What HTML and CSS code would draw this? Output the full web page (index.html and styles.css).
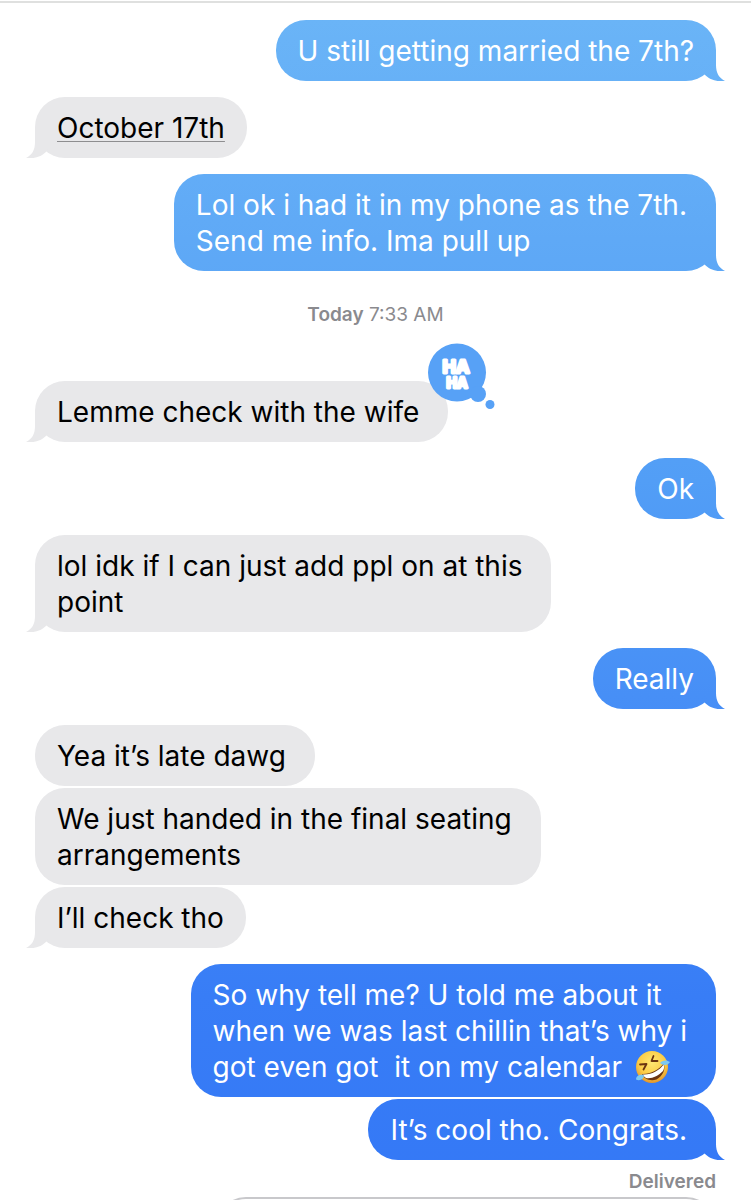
FILE: index.html
```
<!DOCTYPE html>
<html lang="en">
<head>
    <meta charset="UTF-8">
    <meta name="viewport" content="width=device-width, initial-scale=1.0">
    <title>Messages</title>
    <link rel="stylesheet" href="styles.css">
</head>
<body>
    <main class="chat">
        <div class="bubble sent tail">U still getting married the 7th?</div>
        <div class="bubble received tail"><a class="date-link" href="#">October 17th</a></div>
        <div class="bubble sent tail wide">Lol ok i had it in my phone as the 7th.<br>Send me info. Ima pull up</div>

        <p class="timestamp"><strong>Today</strong> 7:33 AM</p>

        <div class="bubble received tail wide">
            Lemme check with the wife
            <svg class="reaction" viewBox="0 0 68 67" role="img" aria-label="Ha ha">
                <circle cx="29" cy="29.5" r="29"/>
                <circle cx="50" cy="51" r="8"/>
                <circle cx="62" cy="61.5" r="4.5"/>
                <text x="28" y="30" font-size="18">HA</text>
                <text x="29" y="45" font-size="14">HA</text>
            </svg>
        </div>
        <div class="bubble sent tail">Ok</div>
        <div class="bubble received tail wide">lol idk if I can just add ppl on at this<br>point</div>
        <div class="bubble sent tail">Really</div>
        <div class="bubble received wide">Yea it’s late dawg</div>
        <div class="bubble received wide next">We just handed in the final seating<br>arrangements</div>
        <div class="bubble received tail next">I’ll check tho</div>
        <div class="bubble sent wide">So why tell me? U told me about it<br>when we was last chillin that’s why i<br>got even got&nbsp; it on my calendar
            <svg class="emoji" viewBox="0 0 36 36" role="img" aria-label="Rolling on the floor laughing">
                <defs>
                    <radialGradient id="face" cx="50%" cy="35%" r="65%">
                        <stop offset="0" stop-color="#ffe873"/>
                        <stop offset="0.65" stop-color="#fbcb45"/>
                        <stop offset="1" stop-color="#e2952c"/>
                    </radialGradient>
                </defs>
                <circle cx="18" cy="18" r="16" fill="url(#face)"/>
                <path d="M8 25C16 25.5 25 21 29.5 14.5C32 20 29 27 22.5 30.5C16 32.5 10 30 8 25Z" fill="#6b3410"/>
                <path d="M9 25.5C17 26 25 22 29.5 15.5C30.5 18 30 20 29 22C24 27 18 30 12 29C10.5 28 9.5 27 9 25.5Z" fill="#fff"/>
                <path d="M6 15.5L12.5 15L9.5 20.5M19.5 7L17.5 12L23.5 12" fill="none" stroke="#6b3410" stroke-width="1.8" stroke-linecap="round" stroke-linejoin="round"/>
                <path d="M26 14C28 11 33 10.5 36 13C34 16.5 29 17 26 14Z" fill="#7cc9f2"/>
                <path d="M10 26C10 30 6 32.5 2 30.5C2 27 5.5 25 10 26Z" fill="#7cc9f2"/>
            </svg>
        </div>
        <div class="bubble sent tail wide next">It’s cool tho. Congrats.</div>
        <p class="status">Delivered</p>
        <input class="compose" type="text" aria-label="Message">
    </main>
</body>
</html>
```

FILE: styles.css
```
* { box-sizing: border-box; }
body {
    margin: 0;
    padding-top: 1px;
    background: #fff;
    color: #000;
    font-family: Inter, "Liberation Sans", sans-serif;
    font-size: 28px;
    line-height: 36px;
}
.chat {
    display: flex;
    flex-direction: column;
    height: calc(100vh - 1px);
    padding: 17px 35px 0;
    border-top: 2px solid #dfe0df;
    overflow: hidden;
}
.bubble {
    position: relative;
    flex-shrink: 0;
    margin-bottom: 16px;
    padding: 13px 22px 12px;
    border-radius: 30px;
}
.wide { padding-right: 29px; }
.sent {
    align-self: flex-end;
    color: #fff;
}
/* one gradient runs down the whole window behind every sent bubble */
.sent, .sent.tail::after {
    background: linear-gradient(#6bb5f7, #5fa9f6 20%, #529ef6 40%, #478ff6 58%, #387df6 83%, #3478f6) fixed;
}
.received { align-self: flex-start; }
.received, .received.tail::after { background-color: #e8e8ea; }
.tail::after {
    content: "";
    position: absolute;
    right: -9px;
    bottom: 0;
    width: 25px;
    height: 30px;
    clip-path: path("M16 0V14C16 22 19 27 25 30C17 31 10 29 4.5 23.5L0 18L8 0Z");
}
.received.tail::after {
    right: auto;
    left: -9px;
    transform: scaleX(-1);
}
.next { margin-top: -14px; }
.date-link {
    color: inherit;
    text-decoration: underline;
    text-decoration-color: #8e8e90;
    text-decoration-thickness: 1px;
    text-underline-offset: 3px;
    text-decoration-skip-ink: none;
}
.timestamp, .status {
    margin: 0;
    color: #8a8a8e;
    font-size: 19px;
    line-height: 24px;
}
.timestamp {
    padding: 16px 0 54px;
    text-align: center;
}
.timestamp strong { font-weight: 600; }
.status {
    margin-top: -6px;
    text-align: right;
    font-weight: 600;
}
.reaction {
    position: absolute;
    right: -48px;
    top: -38px;
    width: 68px;
    height: 67px;
    fill: #57a1f6;
}
.reaction text {
    fill: #fff;
    stroke: #fff;
    stroke-width: 3px;
    stroke-linejoin: round;
    font-weight: 700;
    text-anchor: middle;
}
.emoji {
    width: 36px;
    height: 36px;
    margin-left: 4px;
    vertical-align: top;
}
.compose {
    flex-shrink: 0;
    align-self: flex-end;
    width: 500px;
    max-width: 74%;
    height: 60px;
    margin-top: 3px;
    padding: 0 22px;
    border: 2px solid #c8c8cb;
    border-radius: 30px;
    background: #fff;
    font: inherit;
}
```
